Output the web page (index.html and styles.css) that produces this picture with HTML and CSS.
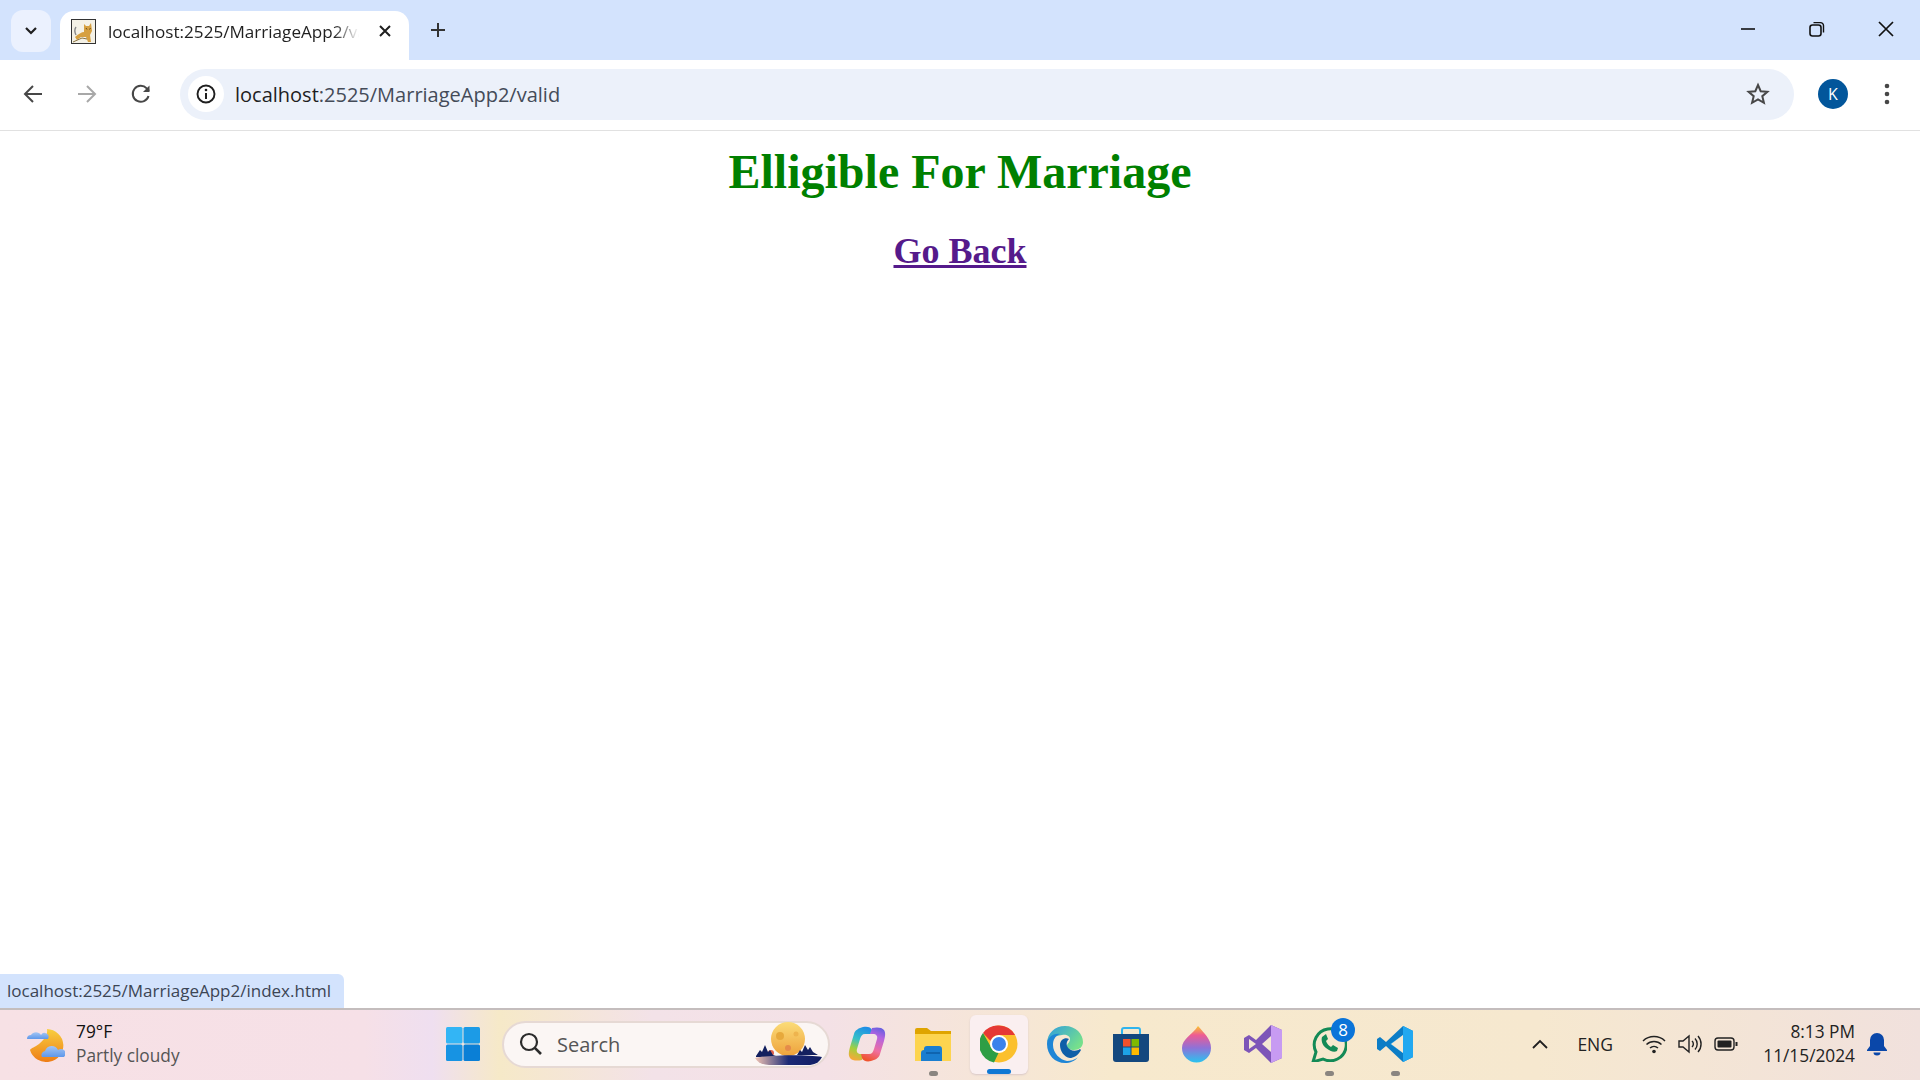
FILE: index.html
```html
<!DOCTYPE html>
<html lang="en">
<head>
<meta charset="utf-8">
<title>localhost:2525/MarriageApp2/valid</title>
<link rel="stylesheet" href="styles.css">
</head>
<body>
<div class="window">
  <header class="tabstrip">
    <button class="tab-search"><svg width="14" height="10" viewBox="0 0 14 10"><path d="M2 2l5 5 5-5" fill="none" stroke="#1f1f1f" stroke-width="2.2"/></svg></button>
    <div class="tab">
      <svg class="favicon" width="25" height="25" viewBox="0 0 25 25">
        <rect x=".5" y=".5" width="24" height="24" fill="#f4f1e6" stroke="#333"/>
        <path d="M4 18c3-3 7-5 9-5l0-8 2 2 3 0 2-3 1 8-2 4 1 7-3 0-2-5-5 0-4 3z" fill="#d6a040"/>
        <path d="M5 8c-2 3-1 6 0 8" fill="none" stroke="#888" stroke-width="1.400"/>
        <path d="M15 9l1 1.500M19.500 9l-1 1.500" stroke="#6b4a16" stroke-width="1"/>
        <path d="M2 23l9-4 5 1" fill="none" stroke="#8a7440" stroke-width="1"/>
      </svg>
      <span class="tab-title">localhost:2525/MarriageApp2/valid</span>
      <svg class="tab-close" width="14" height="14" viewBox="0 0 14 14"><path d="M2 2l10 10M12 2L2 12" stroke="#1f1f1f" stroke-width="2"/></svg>
    </div>
    <svg class="new-tab" width="18" height="18" viewBox="0 0 18 18"><path d="M9 2v14M2 9h14" stroke="#333" stroke-width="2"/></svg>
    <div class="win-controls">
      <svg width="18" height="18" viewBox="0 0 18 18"><path d="M2 9h14" stroke="#111" stroke-width="1.6"/></svg>
      <svg width="18" height="18" viewBox="0 0 18 18"><rect x="2" y="5" width="11" height="11" rx="2.5" fill="none" stroke="#111" stroke-width="1.6"/><path d="M5.5 2.6h7a3 3 0 0 1 3 3v7" fill="none" stroke="#111" stroke-width="1.4"/></svg>
      <svg width="18" height="18" viewBox="0 0 18 18"><path d="M2 2l14 14M16 2L2 16" stroke="#111" stroke-width="1.7"/></svg>
    </div>
  </header>

  <nav class="toolbar">
    <svg class="nav-icon" width="22" height="22" viewBox="0 0 22 22"><path d="M20 11H3.5M11 3l-8 8 8 8" fill="none" stroke="#474747" stroke-width="2"/></svg>
    <svg class="nav-icon" width="22" height="22" viewBox="0 0 22 22"><path d="M2 11h16.500M11 3l8 8-8 8" fill="none" stroke="#a8a8a8" stroke-width="2"/></svg>
    <svg class="nav-icon" width="22" height="22" viewBox="0 0 22 22"><path d="M18.500 13a8 8 0 1 1-1.800-7.600L19 8" fill="none" stroke="#474747" stroke-width="2"/><path d="M19.500 2.500V9h-6.500z" fill="#474747"/></svg>
    <div class="omnibox">
      <span class="site-info"><svg width="22" height="22" viewBox="0 0 22 22"><circle cx="11" cy="11" r="8.500" fill="none" stroke="#1f1f1f" stroke-width="1.900"/><path d="M11 10v6" stroke="#1f1f1f" stroke-width="2"/><circle cx="11" cy="7" r="1.300" fill="#1f1f1f"/></svg></span>
      <span class="url"><span class="url-host">localhost</span>:2525/MarriageApp2/valid</span>
      <svg class="star" width="24" height="24" viewBox="0 0 24 24"><path d="M12 3l2.700 6.200 6.700.6-5.100 4.400 1.600 6.600L12 17.300l-5.900 3.500 1.600-6.600-5.100-4.400 6.700-.6z" fill="none" stroke="#474747" stroke-width="2"/></svg>
    </div>
    <span class="avatar">K</span>
    <svg class="menu" width="6" height="24" viewBox="0 0 6 24"><circle cx="3" cy="4" r="2.300" fill="#474747"/><circle cx="3" cy="12" r="2.300" fill="#474747"/><circle cx="3" cy="20" r="2.300" fill="#474747"/></svg>
  </nav>

  <main class="page">
    <h1 class="headline">Elligible For Marriage</h1>
    <h2 class="back"><a class="back-link" href="#">Go Back</a></h2>
    <div class="status-bubble">localhost:2525/MarriageApp2/index.html</div>
  </main>

  <footer class="taskbar">
    <div class="weather">
      <svg width="38" height="36" viewBox="0 0 38 36">
        <defs><linearGradient id="moon" x1="0" y1="0" x2="0" y2="1"><stop offset="0" stop-color="#f8cf3f"/><stop offset="1" stop-color="#ee7d16"/></linearGradient>
        <linearGradient id="cloud" x1="0" y1="0" x2="0" y2="1"><stop offset="0" stop-color="#a3c5f4"/><stop offset="1" stop-color="#5f98ea"/></linearGradient></defs>
        <path d="M20 3a17 16.500 0 1 1-17 21c1-2 5-3 9-6 5-4 9-9 8-15z" fill="url(#moon)"/>
        <path d="M0 12a4 4 0 0 1 4-4 6 6 0 0 1 10 0 4 4 0 0 1 7 4z" fill="url(#cloud)" transform="translate(0 1)"/>
        <path d="M15 31a4 4 0 0 1 3-6 7 7 0 0 1 13-1 4 4 0 0 1 6 7z" fill="url(#cloud)"/>
      </svg>
      <div class="weather-text"><span class="temp">79°F</span><span class="cond">Partly cloudy</span></div>
    </div>

    <div class="slot"><svg width="36" height="36" viewBox="0 0 36 36">
      <rect x="1" y="1" width="16.500" height="16.500" rx="1.500" fill="#33b5f5"/><rect x="18.500" y="1" width="16.500" height="16.500" rx="1.500" fill="#1c9be6"/><rect x="1" y="18.500" width="16.500" height="16.500" rx="1.500" fill="#1793e3"/><rect x="18.500" y="18.500" width="16.500" height="16.500" rx="1.500" fill="#0a7fd6"/></svg></div>

    <div class="search">
      <svg width="24" height="24" viewBox="0 0 24 24"><circle cx="10" cy="10" r="8" fill="none" stroke="#2b2b2b" stroke-width="2.200"/><path d="M15.800 15.800L22 22" stroke="#2b2b2b" stroke-width="2.600"/></svg>
      <span class="search-text">Search</span>
      <svg class="search-art" width="68" height="44" viewBox="0 0 68 44">
        <defs><linearGradient id="ball" x1="0" y1="0" x2="0" y2="1"><stop offset="0" stop-color="#fbdc78"/><stop offset="1" stop-color="#eea23c"/></linearGradient>
        <linearGradient id="ground" x1="0" y1="0" x2="1" y2="0"><stop offset="0" stop-color="#f2c4b4"/><stop offset=".5" stop-color="#1b2a75"/><stop offset="1" stop-color="#101d63"/></linearGradient></defs>
        <circle cx="33" cy="17" r="17" fill="url(#ball)"/>
        <circle cx="25" cy="14" r="4" fill="#e7a93c"/><circle cx="33" cy="26" r="3" fill="#e58b4a"/><circle cx="41" cy="12" r="2.500" fill="#eeb44e"/><circle cx="16" cy="31" r="3" fill="#e0604c"/>
        <path d="M1 34l4-6 2 2 3-7 3 7 2-2 3 5 3 1v1H1zM42 33l3-5 2 2 3-7 3 5 2-3 3 5 5 3z" fill="#13205f"/>
        <path d="M0 36c12-3 50-4 67-1-3 6-8 8-14 8H14C8 43 3 41 0 36z" fill="url(#ground)"/>
      </svg>
    </div>

    <div class="slot"><svg width="38" height="36" viewBox="0 0 38 36">
      <defs><linearGradient id="cpA" x1=".6" y1="0" x2=".3" y2="1"><stop offset="0" stop-color="#1f8fe6"/><stop offset=".4" stop-color="#35c0c8"/><stop offset=".7" stop-color="#a5cf3c"/><stop offset="1" stop-color="#f6a83a"/></linearGradient>
      <linearGradient id="cpB" x1=".4" y1="1" x2=".7" y2="0"><stop offset="0" stop-color="#f0542e"/><stop offset=".35" stop-color="#ef6fa0"/><stop offset=".75" stop-color="#b464e0"/><stop offset="1" stop-color="#6a5fe0"/></linearGradient></defs>
      <path d="M15 1c4-1 8 0 9 3l1 4h-8c-3 0-4 2-5 5L9 23c-1 3 1 5 4 5h3l-2 6c-4 1-10 1-12-2-2-3-1-7 0-11L6 8c1-4 5-6 9-7z" fill="url(#cpA)"/>
      <path d="M23 35c-4 1-8 0-9-3l-1-4h8c3 0 4-2 5-5l3-10c1-3-1-5-4-5h-3l2-6c4-1 10-1 12 2 2 3 1 7 0 11l-4 13c-1 4-5 6-9 7z" fill="url(#cpB)"/>
      </svg></div>

    <div class="slot has-dot"><svg width="38" height="34" viewBox="0 0 38 34">
      <path d="M1 3a2 2 0 0 1 2-2h10l4 3h20v5H1z" fill="#dfa400"/>
      <path d="M1 7h36v27H1z" fill="#fdd44f"/>
      <path d="M7 26a3 3 0 0 1 3-3v-1a3 3 0 0 1 3-3h12a3 3 0 0 1 3 3v12H7z" fill="#1a7ed0"/>
      <path d="M12 26h14" stroke="#0d5ca5" stroke-width="1.500"/></svg></div>

    <div class="slot active"><svg width="38" height="38" viewBox="0 0 38 38">
      <circle cx="19" cy="19" r="18.500" fill="#fbc02d"/>
      <path d="M19 .5A18.500 18.500 0 0 1 35 10H19a9 9 0 0 0-8.500 6L3 8A18.500 18.500 0 0 1 19 .5z" fill="#e53935"/>
      <path d="M3 8l8.500 15a9 9 0 0 0 7 5l-4.500 9.500A18.500 18.500 0 0 1 3 8z" fill="#2e9e45"/>
      <circle cx="19" cy="19" r="9" fill="#fff"/><circle cx="19" cy="19" r="7" fill="#3b82ec"/></svg></div>

    <div class="slot"><svg width="38" height="38" viewBox="0 0 38 38">
      <defs><linearGradient id="edA" x1="0" y1="0" x2="1" y2=".6"><stop offset="0" stop-color="#2d9ce0"/><stop offset="1" stop-color="#76e08c"/></linearGradient></defs>
      <path d="M1 19C1 8 9 1 19 1c11 0 18 8 18 16 0 5-4 8-9 8-4 0-7-2-7-4 0-3 3-3 3-7 0-3-4-5-8-4C8 11 1 14 1 19z" fill="url(#edA)"/>
      <path d="M1 19c0-6 6-11 13-10-5 2-7 6-7 11 0 8 7 15 14 16 4 0 7-1 10-3l1-1c-3 4-8 6-13 6C9 38 1 30 1 19z" fill="#1f86d6"/>
      <path d="M14 20c0-5 5-8 9-6-2 2-3 4-2 7 2 5 9 6 13 3l1 1c-3 6-8 8-11 8-6-1-10-7-10-13z" fill="#0f5fa8"/></svg></div>

    <div class="slot"><svg width="36" height="36" viewBox="0 0 36 36">
      <path d="M9 8V4a2 2 0 0 1 2-2h14a2 2 0 0 1 2 2v4" fill="none" stroke="#2fb4ee" stroke-width="2"/>
      <path d="M0 8h36v25a3 3 0 0 1-3 3H3a3 3 0 0 1-3-3z" fill="#14487e"/>
      <rect x="10" y="13" width="7.500" height="7.500" fill="#f2512c"/><rect x="18.500" y="13" width="7.500" height="7.500" fill="#7fb900"/><rect x="10" y="21.500" width="7.500" height="7.500" fill="#1da3e8"/><rect x="18.500" y="21.500" width="7.500" height="7.500" fill="#fdb900"/></svg></div>

    <div class="slot"><svg width="30" height="38" viewBox="0 0 30 38">
      <defs><linearGradient id="flA" x1="0" y1="1" x2="0" y2="0"><stop offset="0" stop-color="#29c4ef"/><stop offset=".4" stop-color="#8e72d8"/><stop offset=".75" stop-color="#ee5b93"/><stop offset="1" stop-color="#fbc52d"/></linearGradient></defs>
      <path d="M16 1c6 7 13 13 13 22a14.500 14.500 0 0 1-29 0C0 14 10 10 16 1z" fill="url(#flA)"/></svg></div>

    <div class="slot"><svg width="38" height="38" viewBox="0 0 38 38">
      <path d="M27 0l11 5v28l-11 5-15-15-7 5-5-3V13l5-3 7 5z" fill="#7d55b8"/>
      <path d="M27 0l11 5v28l-11 5z" fill="#c79bf2"/>
      <path d="M5 14l7 5-7 5z" fill="#f5e8d4"/><path d="M27 11v16l-9-8z" fill="#f5e8d4"/></svg></div>

    <div class="slot has-dot"><svg width="36" height="36" viewBox="0 0 36 36">
      <path d="M2 36l3-10A16 16 0 1 1 12 33z" fill="none" stroke="#138a56" stroke-width="3"/>
      <path d="M11 11c-1 3 0 8 4 11s8 5 11 3l1-3-5-3-2 2c-2-1-4-3-5-6l2-2-2-5z" fill="#138a56"/></svg>
      <span class="badge">8</span></div>

    <div class="slot has-dot"><svg width="36" height="36" viewBox="0 0 36 36">
      <path d="M26 0l10 5v26l-10 5-17-16-6 5-3-2V13l3-2 6 5z" fill="#0c7dc6"/>
      <path d="M26 0l10 5v26l-10 5V9L13 18l13 9z" fill="#1f9ee8"/>
      <path d="M26 0l10 5v26l-10 5z" fill="#22a8f0"/>
      <path d="M26 9v18l-12-9z" fill="#f7e9d2"/></svg></div>

    <div class="tray">
      <svg width="16" height="10" viewBox="0 0 16 10"><path d="M1 9l7-7 7 7" fill="none" stroke="#1f1f1f" stroke-width="1.800"/></svg>
      <span class="lang">ENG</span>
      <div class="tray-icons">
        <svg width="24" height="20" viewBox="0 0 24 20"><path d="M1 7a16 16 0 0 1 22 0M4.500 10.500a11 11 0 0 1 15 0M8 14a6 6 0 0 1 8 0" fill="none" stroke="#222" stroke-width="1.500"/><circle cx="12" cy="17.500" r="1.800" fill="#222"/></svg>
        <svg width="24" height="20" viewBox="0 0 24 20"><path d="M1 7h4l6-5v16l-6-5H1z" fill="none" stroke="#222" stroke-width="1.400"/><path d="M14 7a4 4 0 0 1 0 6M17 4.500a8 8 0 0 1 0 11M20 2a12 12 0 0 1 0 16" fill="none" stroke="#222" stroke-width="1.400"/></svg>
        <svg width="24" height="16" viewBox="0 0 24 16"><rect x="1" y="2" width="19" height="12" rx="3" fill="none" stroke="#222" stroke-width="1.400"/><rect x="3.500" y="4.500" width="14" height="7" rx="1" fill="#222"/><path d="M21.500 6h2v4h-2z" fill="#222"/></svg>
      </div>
      <div class="clock"><span>8:13 PM</span><span>11/15/2024</span></div>
      <svg class="bell" width="20" height="24" viewBox="0 0 20 24"><path d="M10 1a7 7 0 0 1 7 7v6l3 4v1H0v-1l3-4V8a7 7 0 0 1 7-7z" fill="#0a47a9"/><path d="M6.500 20.500h7a3.500 3 0 0 1-7 0z" fill="#0a47a9"/></svg>
    </div>
  </footer>
</div>
</body>
</html>
```
FILE: styles.css
```css
* { box-sizing: border-box; }
html, body { margin: 0; height: 100%; }
body { overflow: hidden; background: #fff; font-family: "Open Sans", "Noto Sans", sans-serif; }
.window { display: flex; flex-direction: column; height: 1080px; }

.tabstrip { flex: none; height: 60px; background: #d3e3fd; display: flex; align-items: flex-start; padding-left: 11px; }
.tab-search { flex: none; width: 40px; height: 42px; margin-top: 10px; border: 0; padding: 0; border-radius: 12px; background: #ebf1fe; display: flex; align-items: center; justify-content: center; }
.tab { flex: none; width: 349px; height: 49px; margin: 11px 0 0 9px; background: #fff; border-radius: 14px 14px 0 0; display: flex; align-items: center; padding: 0 17px 9px 11px; position: relative; }
.favicon { flex: none; }
.tab-title { flex: 1; min-width: 0; margin-left: 12px; font-size: 17.100px; color: #1f1f1f; white-space: nowrap; overflow: hidden; -webkit-mask-image: linear-gradient(90deg, #000 90%, transparent 100%); mask-image: linear-gradient(90deg, #000 90%, transparent 100%); }
.tab-close { flex: none; margin-left: 19px; }
.new-tab { flex: none; margin: 21px 0 0 20px; }
.win-controls { margin-left: auto; display: flex; gap: 51px; padding: 20px 25px 0 0; }

.toolbar { flex: none; height: 71px; padding-bottom: 2px; background: #fff; border-top-left-radius: 12px; border-top-right-radius: 12px; border-bottom: 1px solid #e1e1e1; display: flex; align-items: center; padding-left: 22px; }
.nav-icon { flex: none; margin-right: 32px; }
.nav-icon:nth-child(3) { margin-right: 28px; }
.omnibox { flex: none; width: 1614px; height: 51px; border-radius: 26px; background: #ecf1fa; display: flex; align-items: center; padding-left: 8px; padding-right: 24px; }
.site-info { flex: none; width: 36px; height: 36px; border-radius: 50%; background: #fff; display: flex; align-items: center; justify-content: center; }
.url { margin-left: 11px; font-size: 20px; color: #444b58; white-space: nowrap; }
.url-host { color: #1f1f1f; }
.star { margin-left: auto; }
.avatar { flex: none; margin-left: 24px; width: 30px; height: 30px; border-radius: 50%; background: #02569b; color: #fff; font-size: 16px; display: flex; align-items: center; justify-content: center; }
.menu { flex: none; margin-left: 36px; }

.page { flex: 1; min-height: 0; position: relative; text-align: center; font-family: "Liberation Serif", serif; }
.headline { margin: 12px 0 0; font-size: 48px; line-height: 58px; font-weight: 700; color: #008000; }
.back { margin: 29px 0 0; font-size: 36px; line-height: 42px; font-weight: 700; }
.back-link { color: #551a8b; }
.status-bubble { position: absolute; left: 0; bottom: 0; width: 344px; height: 34px; background: #d3e3fd; border-top-right-radius: 6px; padding-left: 7px; font-family: "Open Sans", sans-serif; font-size: 17px; line-height: 34px; color: #3c4554; text-align: left; white-space: nowrap; }

.taskbar { flex: none; height: 72px; border-top: 2px solid #c4bdbd; padding-bottom: 2px; display: flex; align-items: center; background: linear-gradient(90deg, #f7e1e5 0, #f6e0e7 19%, #efdff0 22.500%, #f6e9c8 26%, #f3e2e8 34%, #f4e1e6 43%, #f7e9cd 58%, #f6e8cf 80%, #f1e1dd 100%); }
.weather { flex: none; width: 430px; display: flex; align-items: center; gap: 11px; padding-left: 27px; }
.weather-text { display: flex; flex-direction: column; font-size: 17.300px; line-height: 24px; padding-bottom: 1px; }
.temp { color: #111; }
.cond { color: #555; }
.slot { flex: none; width: 66px; height: 59px; display: flex; align-items: center; justify-content: center; position: relative; }
.has-dot::after { content: ""; position: absolute; left: 29px; bottom: -2px; width: 9px; height: 5px; border-radius: 3px; background: #8a8580; }
.active { background: #faeff0; border-radius: 6px; box-shadow: 0 1px 2px #d9c8c8; margin-left: 4px; margin-right: 4px; width: 58px; }
.active::after { content: ""; position: absolute; left: 17px; bottom: 0; width: 24px; height: 5px; border-radius: 3px; background: #0f78d4; }
.badge { position: absolute; left: 35px; top: 3px; width: 24px; height: 24px; border-radius: 50%; background: #0a74d9; color: #fff; font-size: 17px; line-height: 24px; text-align: center; }
.search { flex: none; width: 328px; height: 47px; margin: 0 4px 0 6px; border-radius: 24px; background: #fbf6f4; border: 2px solid #e6d9d4; display: flex; align-items: center; padding-left: 15px; position: relative; }
.search-text { margin-left: 14px; font-size: 20px; color: #555; }
.search-art { position: absolute; right: 5px; top: -1px; }
.tray { margin-left: auto; display: flex; align-items: center; padding-right: 33px; }
.lang { margin-left: 29px; font-size: 17.500px; color: #222; }
.tray-icons { display: flex; align-items: center; gap: 12px; margin-left: 29px; }
.clock { margin-left: 9px; width: 108px; padding-bottom: 1px; display: flex; flex-direction: column; align-items: flex-end; font-size: 17.300px; line-height: 24px; color: #222; white-space: nowrap; }
.bell { margin-left: 12px; }
```
